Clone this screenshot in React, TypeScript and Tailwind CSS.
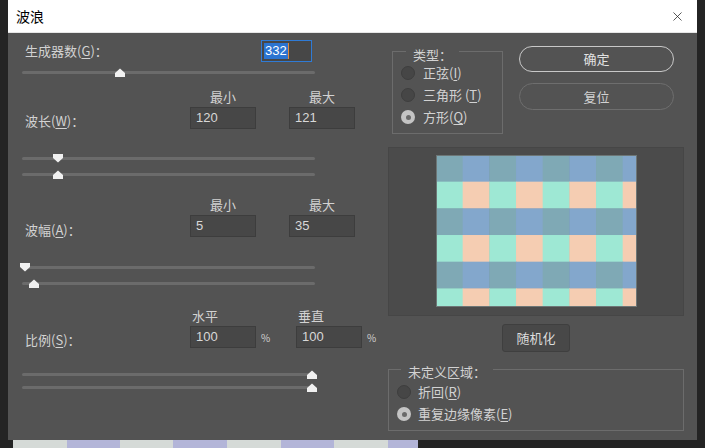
import React from "react";
import { X } from "lucide-react";

const Thumb = ({ down }: { down?: boolean }) => (
  <svg width="10" height="9" viewBox="0 0 10 9" className={down ? "rotate-180" : ""}>
    <path d="M5 0.5 L10 5 L10 9 L0 9 L0 5 Z" fill="#f0f0f0" />
  </svg>
);

const Slider = ({ pos, down, className = "" }: { pos: number; down?: boolean; className?: string }) => (
  <div className={`relative h-[10px] w-[293px] ml-[14px] ${className}`}>
    <div className="absolute left-0 right-0 top-[4px] h-[3px] rounded-full bg-[#6b6b6b]" />
    <div className="absolute top-[1px] flex" style={{ left: pos - 5 }}>
      <Thumb down={down} />
    </div>
  </div>
);

const Field = ({ value, w = "w-[66px]" }: { value: string; w?: string }) => (
  <div
    className={`${w} h-[22px] flex items-center pl-[5px] bg-[#474747] border border-[#3d3d3d] text-[13px] text-[#d8d8d8] font-['Liberation_Sans',sans-serif]`}
  >
    {value}
  </div>
);

const Radio = ({ checked }: { checked?: boolean }) =>
  checked ? (
    <div className="w-[14px] h-[14px] rounded-full bg-[#c4c4c4] flex items-center justify-center">
      <div className="w-[5px] h-[5px] rounded-full bg-[#6a6a6a]" />
    </div>
  ) : (
    <div className="w-[14px] h-[14px] rounded-full bg-[#464646] border border-[#3e3e3e]" />
  );

const Acc = ({ k }: { k: string }) => (
  <>
    (<span className="underline underline-offset-2">{k}</span>)
  </>
);

const Param = ({
  label,
  k,
  h1,
  h2,
  v1,
  v2,
  pct,
  className = "",
  shift,
}: {
  label: string;
  k: string;
  h1: string;
  h2: string;
  v1: string;
  v2: string;
  pct?: boolean;
  className?: string;
  shift: string;
}) => (
  <div className={`flex flex-col ${className}`}>
    {pct ? (
      <div className="flex h-[20px] items-center pl-[184px]">
        <span className="w-[106px]">{h1}</span>
        <span>{h2}</span>
      </div>
    ) : (
      <div className="flex h-[20px] items-center pl-[182px]">
        <span className="w-[66px] text-center">{h1}</span>
        <span className="ml-[33px] w-[66px] text-center">{h2}</span>
      </div>
    )}
    <div className="flex h-[22px] items-center">
      <span className={`w-[182px] pl-[17px] ${shift}`}>
        {label}
        <Acc k={k} />：
      </span>
      <Field value={v1} />
      {pct ? (
        <>
          <span className="w-[40px] pl-[5px] text-[10px]">%</span>
          <Field value={v2} />
          <span className="pl-[5px] text-[10px]">%</span>
        </>
      ) : (
        <div className="ml-[33px]">
          <Field value={v2} />
        </div>
      )}
    </div>
  </div>
);

const Preview = () => {
  const cols = 8;
  const rows = 6;
  const s = 26.67;
  const cells = [];
  for (let r = 0; r < rows; r++) {
    for (let c = 0; c < cols; c++) {
      const blueRow = r % 2 === 0;
      const fill = blueRow ? (c % 2 === 0 ? "#7fa9b5" : "#83a7cc") : c % 2 === 0 ? "#9ee8d4" : "#f5cdb2";
      cells.push(<rect key={`${r}-${c}`} x={c * s} y={r * s} width={s + 0.5} height={s + 0.5} fill={fill} />);
    }
  }
  return (
    <svg width="201" height="152" viewBox="0 0 201 152">
      {cells}
      <rect x="0.5" y="0.5" width="200" height="151" fill="none" stroke="#6d7676" strokeWidth="1" />
    </svg>
  );
};

export default function App() {
  return (
    <div className="w-[705px] h-[448px] bg-[#242424] overflow-hidden font-['Noto_Sans_CJK_SC','Noto_Sans',sans-serif] text-[13px] text-[#d2d2d2]">
      <div className="ml-[8px] w-[689px] h-[440px] flex flex-col">
        <div className="h-[33px] bg-white border-b border-[#e6e6e6] flex items-center pl-[8px] pr-[12px]">
          <span className="text-[14px] text-black">波浪</span>
          <X size={15} strokeWidth={1.2} className="ml-auto text-[#222]" />
        </div>
        <div className="flex-1 bg-[#535353] flex">
          {/* left column */}
          <div className="w-[380px] flex flex-col">
            <div className="mt-[7px] flex h-[22px] items-center">
              <span className="w-[253px] pl-[17px]">
                生成器数<Acc k="G" />：
              </span>
              <div className="w-[51px] h-[22px] flex items-center pl-[2px] bg-[#474747] border border-[#2f7bd6] font-['Liberation_Sans',sans-serif]">
                <span className="bg-[#2b74d1] text-white leading-[16px] px-[1px] border-r border-[#e08a3c]">332</span>
              </div>
            </div>
            <Slider pos={97.5} className="mt-[5px]" />

            <Param label="波长" k="W" h1="最小" h2="最大" v1="120" v2="121" className="mt-[10px]" shift="mt-[6px]" />
            <Slider pos={36} down className="mt-[24px]" />
            <Slider pos={36} className="mt-[6px]" />

            <Param label="波幅" k="A" h1="最小" h2="最大" v1="5" v2="35" className="mt-[16px]" shift="mt-[8px]" />
            <Slider pos={3} down className="mt-[25px]" />
            <Slider pos={12} className="mt-[6px]" />

            <Param label="比例" k="S" h1="水平" h2="垂直" v1="100" v2="100" pct className="mt-[18px]" shift="mt-[6px]" />
            <Slider pos={290} className="mt-[21px]" />
            <Slider pos={290} className="mt-[3px]" />
          </div>

          {/* right column */}
          <div className="w-[296px] flex flex-col">
            <div className="flex items-start">
              <div className="relative ml-[4px] mt-[18px] w-[111px] h-[83px] border border-[#6c6c6c] pt-[10px] flex flex-col">
                <span className="absolute left-[13px] top-[-5px] px-[7px] leading-[15px] bg-[#535353]">类型：</span>
                {[
                  ["正弦", "I", false],
                  ["三角形 ", "T", false],
                  ["方形", "Q", true],
                ].map(([t, k, c]) => (
                  <div key={k as string} className="h-[22px] flex items-center pl-[8px] gap-[8px]">
                    <Radio checked={c as boolean} />
                    <span>
                      {t as string}
                      <Acc k={k as string} />
                    </span>
                  </div>
                ))}
              </div>
              <div className="ml-[16px] mt-[13px] w-[155px] flex flex-col gap-[11px]">
                <button className="h-[26px] rounded-full border-[1.5px] border-[#c8c8c8] text-[#e2e2e2]">确定</button>
                <button className="h-[27px] rounded-full border-[1.5px] border-[#6e6e6e] text-[#d2d2d2]">复位</button>
              </div>
            </div>

            <div className="mt-[13px] h-[169px] bg-[#4b4b4b] border border-[#464646] flex justify-center pt-[7px]">
              <div className="h-[152px] flex">
                <Preview />
              </div>
            </div>

            <button className="mt-[8px] self-center w-[68px] h-[28px] rounded-[3px] bg-[#484848] border border-[#3f3f3f] text-[#dcdcdc]">
              随机化
            </button>

            <div className="relative mt-[17px] h-[62px] border border-[#6c6c6c] pt-[11px] flex flex-col">
              <span className="absolute left-[12px] top-[-6px] px-[7px] leading-[15px] bg-[#535353]">未定义区域：</span>
              <div className="h-[22px] flex items-center pl-[8px] gap-[7px]">
                <Radio />
                <span>
                  折回<Acc k="R" />
                </span>
              </div>
              <div className="h-[22px] flex items-center pl-[8px] gap-[7px]">
                <Radio checked />
                <span>
                  重复边缘像素<Acc k="E" />
                </span>
              </div>
            </div>
          </div>
        </div>
      </div>
      <div className="ml-[13px] flex h-[8px]">
        {[54, 53, 53, 54, 54, 53, 54, 30].map((w, i) => (
          <div
            key={i}
            className={i % 2 === 0 ? "h-full bg-[#d5dad7]" : "h-full bg-[#b3b5d8]"}
            style={{ width: w }}
          />
        ))}
      </div>
    </div>
  );
}
